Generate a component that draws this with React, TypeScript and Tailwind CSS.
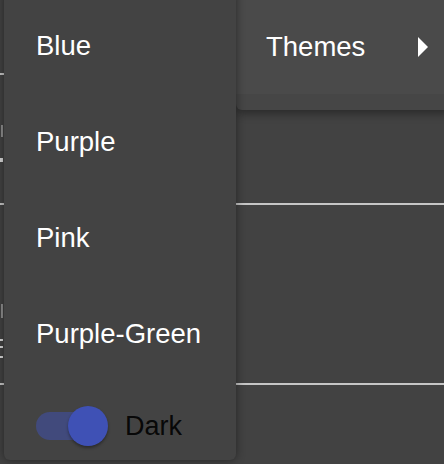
import React from "react";

export default function App() {
  return (
    <div
      className="relative w-[444px] h-[464px] overflow-hidden bg-[#424242]"
      style={{ fontFamily: '"Liberation Sans", Arial, sans-serif' }}
    >
      {/* background list */}
      <div className="flex flex-col w-full">
        <div className="h-[73px]" />
        <div className="h-[2px] bg-[#c6c6c6]" />
        <div className="h-[128px] flex flex-col items-start">
          <div className="mt-[50px] ml-[1px] w-[2px] h-[12px] bg-[#8e8e8e]" />
          <div className="mt-[21px] w-[3px] h-[4px] bg-[#d8d8d8]" />
        </div>
        <div className="h-[2px] bg-[#c6c6c6]" />
        <div className="h-[178px] flex flex-col items-start">
          <div className="mt-[99px] ml-[1px] w-[2px] h-[14px] bg-[#8e8e8e]" />
          <div className="mt-[21px] w-[3px] h-[2px] bg-[#d8d8d8]" />
          <div className="mt-[5px] w-[3px] h-[2px] bg-[#d8d8d8]" />
          <div className="mt-[8px] w-[3px] h-[2px] bg-[#d8d8d8]" />
        </div>
        <div className="h-[2px] bg-[#c6c6c6]" />
      </div>

      {/* Themes popover */}
      <div className="absolute left-[236px] top-[-8px] w-[216px] h-[118px] rounded-[6px] bg-[#464646] shadow-[0_4px_8px_rgba(0,0,0,0.35)] flex flex-col overflow-hidden">
        <div className="h-[102px] shrink-0 pt-[8px] bg-[#4a4a4a] flex items-center pl-[30px] pr-[24px] justify-between">
          <span className="text-[27.5px] leading-[32px] text-white">Themes</span>
          <svg width="10" height="20" viewBox="0 0 10 20">
            <path d="M0 0 L10 10 L0 20 Z" fill="#ffffff" />
          </svg>
        </div>
      </div>

      {/* Theme menu */}
      <div className="absolute left-[4px] top-[-10px] w-[232px] h-[470px] rounded-[6px] bg-[#434343] shadow-[0_0_10px_rgba(0,0,0,0.45)] flex flex-col pt-[8px] pl-[32px]">
        {["Blue", "Purple", "Pink", "Purple-Green"].map((t) => (
          <div key={t} className="h-[96px] shrink-0 flex items-center">
            <span className="text-[27.5px] leading-[32px] text-white">{t}</span>
          </div>
        ))}
        <div className="h-[88px] shrink-0 flex items-center">
          <div className="relative w-[72px] h-[40px]">
            <div className="absolute left-0 top-[6px] w-[68px] h-[28px] rounded-full bg-[#3f51b5]/50" />
            <div className="absolute left-[32px] top-0 w-[40px] h-[40px] rounded-full bg-[#3f51b5] shadow-[0_2px_3px_rgba(0,0,0,0.35)]" />
          </div>
          <span className="ml-[17px] text-[27px] leading-[32px] text-black/90">Dark</span>
        </div>
      </div>
    </div>
  );
}
